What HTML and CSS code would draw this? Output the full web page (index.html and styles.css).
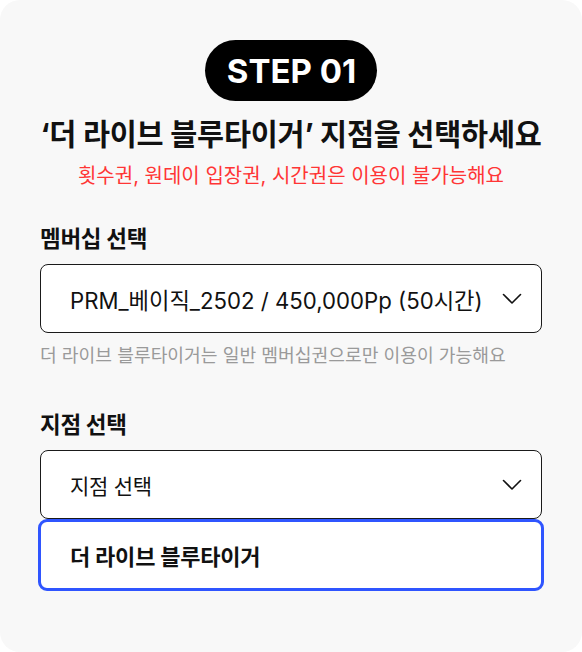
FILE: index.html
```html
<!DOCTYPE html>
<html lang="ko">
<head>
<meta charset="utf-8">
<title>STEP 01</title>
<link rel="stylesheet" href="styles.css">
</head>
<body>
<div class="card">
  <div class="head">
    <div class="badge">STEP 01</div>
    <h1 class="title">‘더 라이브 블루타이거’ 지점을 선택하세요</h1>
    <p class="sub">횟수권, 원데이 입장권, 시간권은 이용이 불가능해요</p>
  </div>

  <div class="field field-membership">
    <div class="label">멤버십 선택</div>
    <div class="select">
      <span class="select-text select-text-wide">PRM_베이직_2502 / 450,000Pp (50시간)</span>
      <svg class="chev" width="20" height="12" viewBox="0 0 20 12"><path d="M1.5 1.5 L10 10 L18.5 1.5" fill="none" stroke="#111" stroke-width="1.6" stroke-linecap="round" stroke-linejoin="round"/></svg>
    </div>
    <div class="help">더 라이브 블루타이거는 일반 멤버십권으로만 이용이 가능해요</div>
  </div>

  <div class="field field-branch">
    <div class="label">지점 선택</div>
    <div class="select">
      <span class="select-text">지점 선택</span>
      <svg class="chev" width="20" height="12" viewBox="0 0 20 12"><path d="M1.5 1.5 L10 10 L18.5 1.5" fill="none" stroke="#111" stroke-width="1.6" stroke-linecap="round" stroke-linejoin="round"/></svg>
    </div>
    <div class="option">더 라이브 블루타이거</div>
  </div>
</div>
</body>
</html>
```

FILE: styles.css
```css
* { box-sizing: border-box; }
html, body { margin: 0; padding: 0; background: #ffffff; }
body {
  font-family: Inter, "Noto Sans CJK KR", sans-serif;
  color: #111111;
}
.card {
  width: 582px;
  height: 652px;
  background: #f8f8f8;
  border-radius: 20px;
  padding: 40px 40px 0;
  display: flex;
  flex-direction: column;
}
.head {
  display: flex;
  flex-direction: column;
  align-items: center;
}
.badge {
  height: 61px;
  padding: 0 21px 0 22px;
  border-radius: 31px;
  background: #000;
  color: #fff;
  font-size: 33px;
  font-weight: 700;
  display: flex;
  align-items: center;
}
.title {
  margin: 17px 0 0;
  font-size: 29.4px;
  line-height: 34px;
  font-weight: 700;
  letter-spacing: -0.2px;
  color: #111;
}
.sub {
  margin: 11px 0 0;
  font-size: 20px;
  line-height: 26px;
  color: #ff3535;
}
.field { display: flex; flex-direction: column; }
.field-membership { margin-top: 36px; }
.field-branch { margin-top: 44px; }
.label {
  font-size: 22.5px;
  line-height: 28px;
  font-weight: 700;
  letter-spacing: -0.3px;
  margin-bottom: 11px;
}
.select {
  height: 69px;
  background: #fff;
  border: 1px solid #1a1a1a;
  border-radius: 8px;
  display: flex;
  align-items: center;
  justify-content: space-between;
  padding: 0 19px 0 29px;
}
.select-text {
  font-size: 21px;
  letter-spacing: -0.3px;
  color: #111;
}
.select-text-wide {
  font-size: 22.2px;
  letter-spacing: 0;
}
.chev { display: block; }
.help {
  margin-top: 10px;
  font-size: 18.2px;
  line-height: 24px;
  color: #9a9a9a;
}
.option {
  margin: 0 -2px;
  height: 72px;
  background: #fff;
  border: 3.5px solid #2f55ff;
  border-radius: 9px;
  display: flex;
  align-items: center;
  padding-left: 29px;
  font-size: 22px;
  font-weight: 700;
  letter-spacing: -0.2px;
}
```
